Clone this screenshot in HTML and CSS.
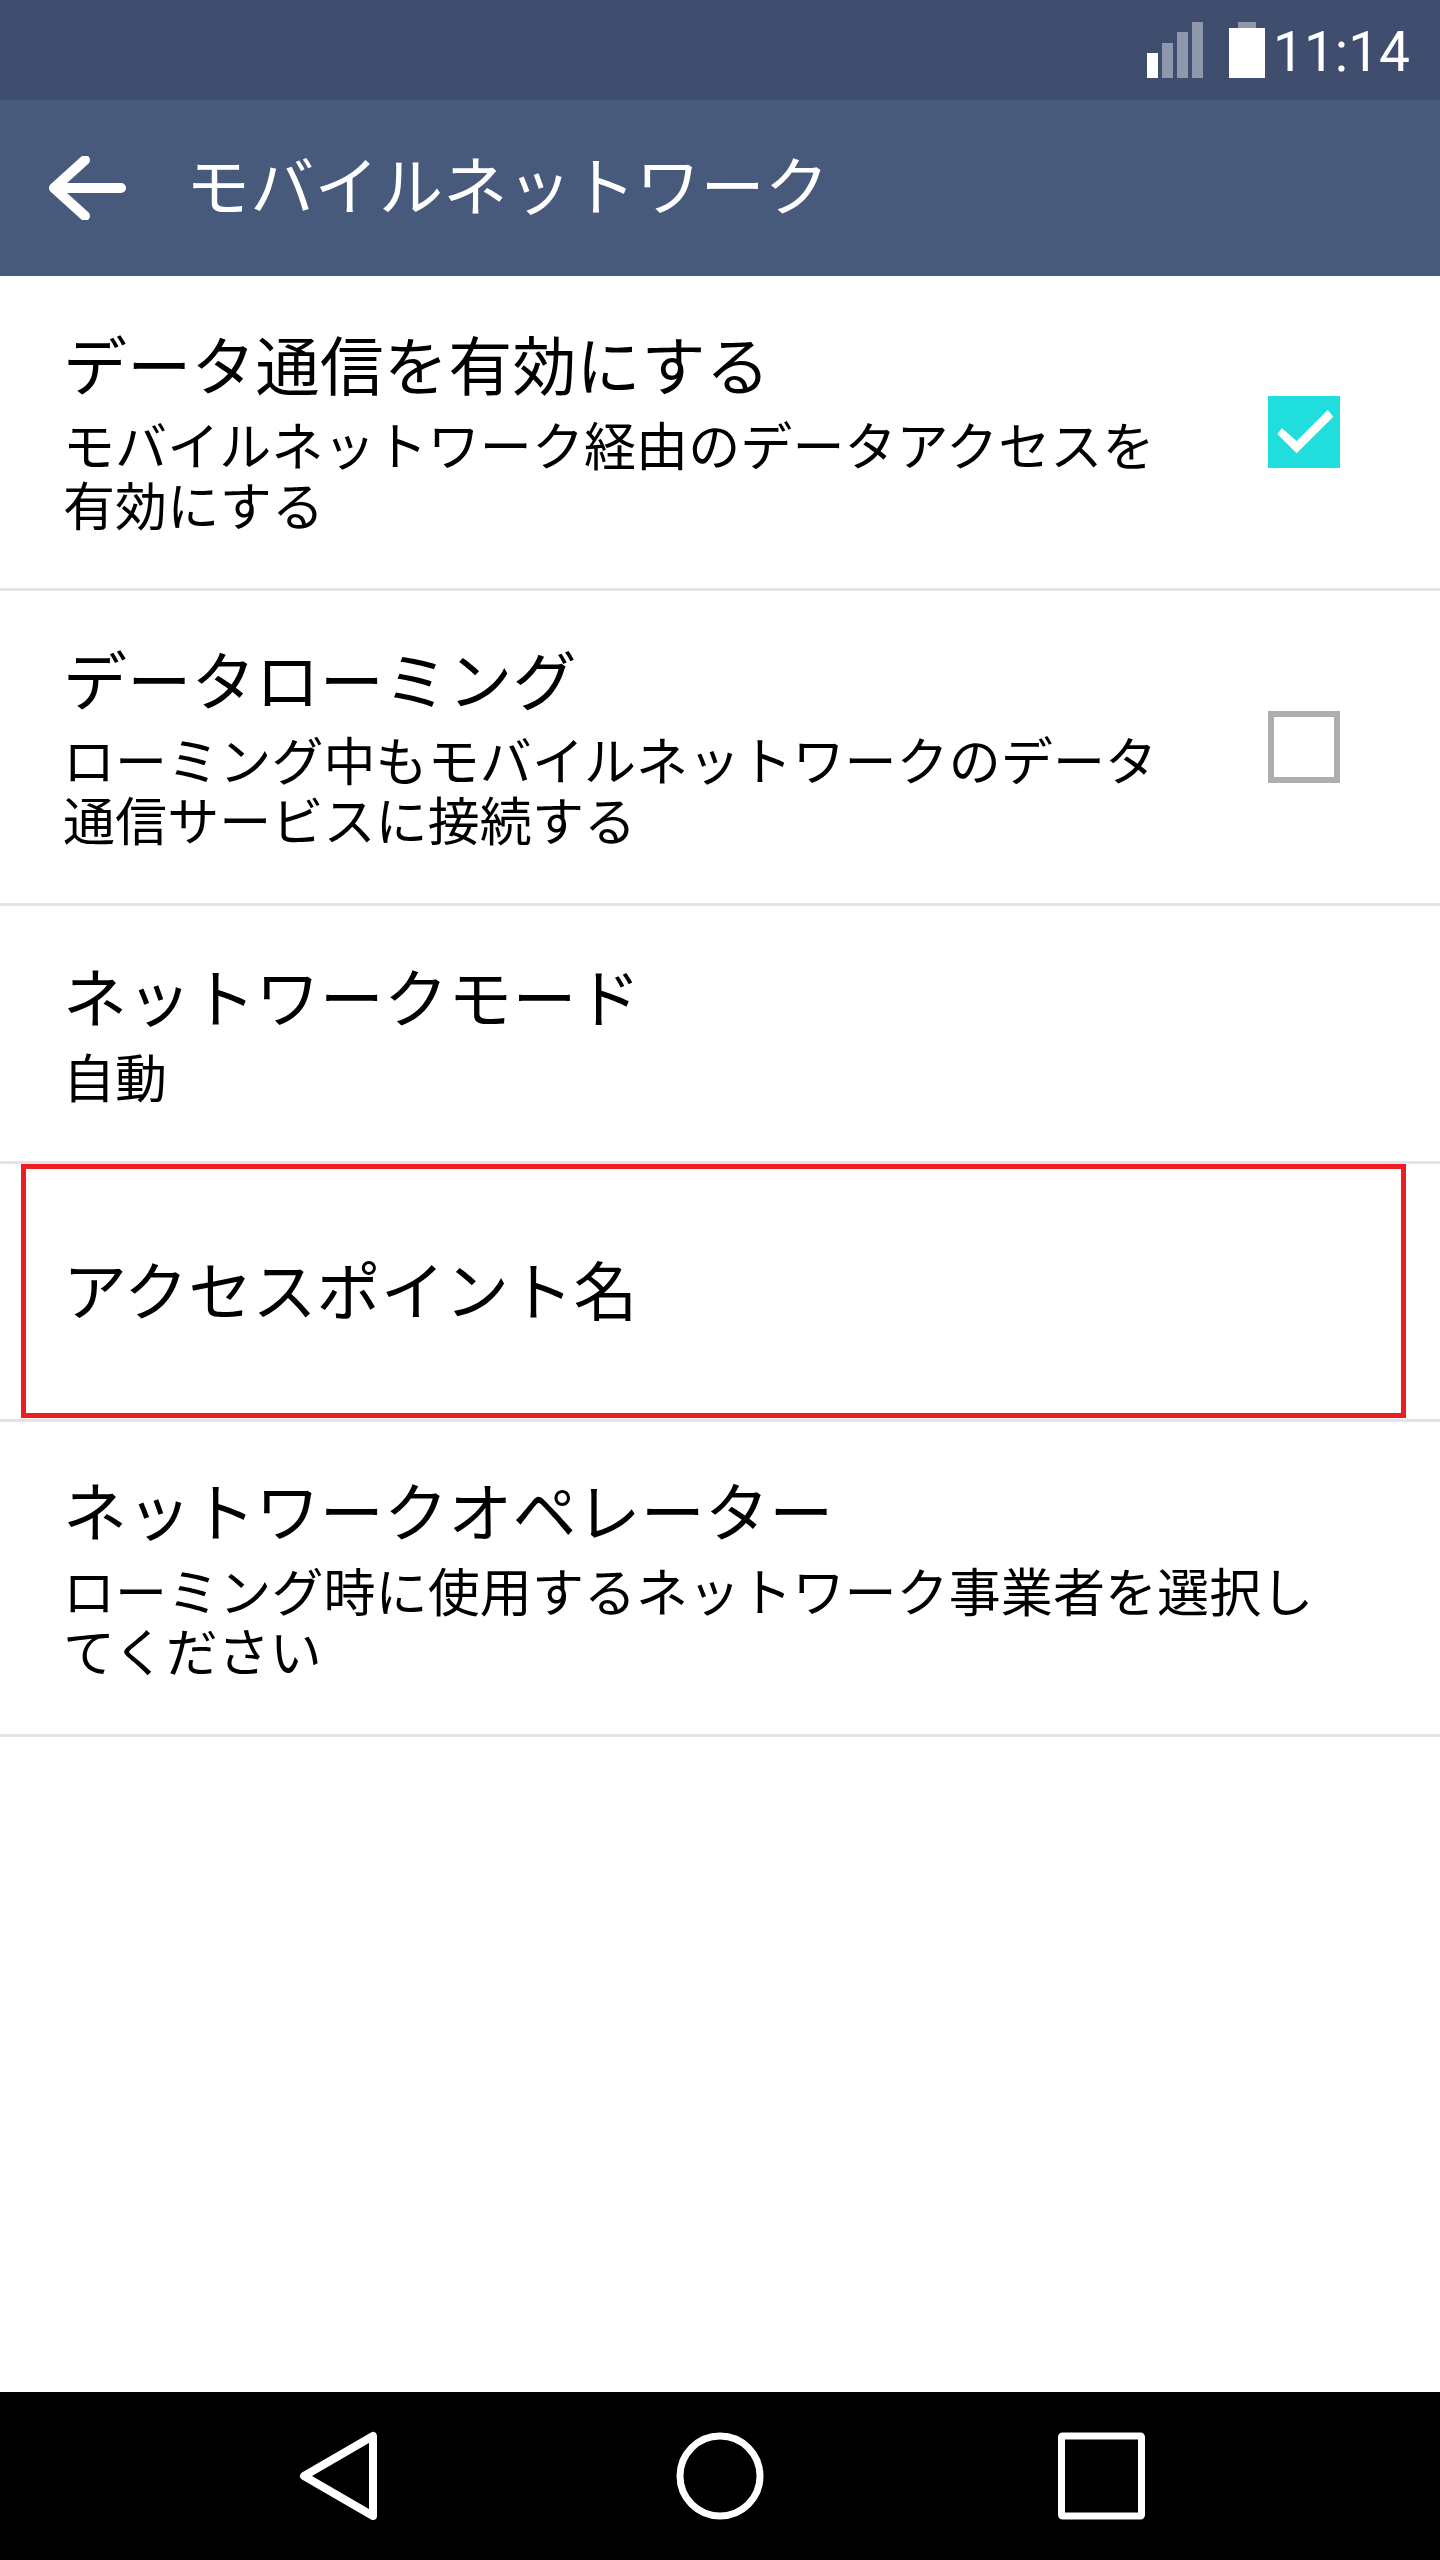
FILE: index.html
```html
<!DOCTYPE html>
<html lang="ja">
<head>
  <meta charset="UTF-8">
  <meta name="viewport" content="width=device-width, initial-scale=1.0">
  <title>モバイルネットワーク</title>
  <link rel="stylesheet" href="styles.css">
</head>
<body>
  <div class="status-bar">
    <svg class="signal" width="56" height="56" viewBox="0 0 56 56">
      <rect x="0" y="31" width="11" height="25" fill="#fff"/>
      <rect x="15" y="21" width="11" height="35" fill="#8f98ab"/>
      <rect x="30" y="10" width="11" height="46" fill="#8f98ab"/>
      <rect x="45" y="0" width="11" height="56" fill="#8f98ab"/>
    </svg>
    <svg class="battery" width="36" height="56" viewBox="0 0 36 56">
      <rect x="9" y="0" width="18" height="6" fill="#8f98ab"/>
      <rect x="0" y="6" width="36" height="50" fill="#fff"/>
    </svg>
    <span class="clock">11:14</span>
  </div>

  <div class="toolbar">
    <svg class="back-arrow" width="80" height="64" viewBox="0 0 80 64">
      <path d="M5 32 H72 M36 4 L5 32 L36 60" fill="none" stroke="#fff" stroke-width="10" stroke-linecap="round" stroke-linejoin="round"/>
    </svg>
    <h1 class="toolbar-title">モバイルネットワーク</h1>
  </div>

  <div class="settings-list">
    <div class="row">
      <div class="row-text">
        <div class="row-title">データ通信を有効にする</div>
        <div class="row-sub">モバイルネットワーク経由のデータアクセスを有効にする</div>
      </div>
      <div class="checkbox checked">
        <svg width="72" height="72" viewBox="0 0 72 72">
          <path d="M9.3 38 L14 32.3 L28.7 45 L59.7 14 L65.3 20.7 L28.7 57.3 Z" fill="#fff"/>
        </svg>
      </div>
    </div>
    <div class="row">
      <div class="row-text">
        <div class="row-title">データローミング</div>
        <div class="row-sub">ローミング中もモバイルネットワークのデータ通信サービスに接続する</div>
      </div>
      <div class="checkbox"></div>
    </div>
    <div class="row row-short">
      <div class="row-text">
        <div class="row-title">ネットワークモード</div>
        <div class="row-sub">自動</div>
      </div>
    </div>
    <div class="row row-short row-single">
      <div class="row-text">
        <div class="row-title">アクセスポイント名</div>
      </div>
      <div class="highlight"></div>
    </div>
    <div class="row">
      <div class="row-text row-text-wide">
        <div class="row-title">ネットワークオペレーター</div>
        <div class="row-sub">ローミング時に使用するネットワーク事業者を選択してください</div>
      </div>
    </div>
  </div>

  <div class="nav-bar">
    <svg width="96" height="96" viewBox="0 0 96 96">
      <path d="M13 48 L82 8 V88 Z" fill="none" stroke="#fff" stroke-width="8" stroke-linejoin="round"/>
    </svg>
    <svg width="96" height="96" viewBox="0 0 96 96">
      <circle cx="48" cy="48" r="40" fill="none" stroke="#fff" stroke-width="7"/>
    </svg>
    <svg width="96" height="96" viewBox="0 0 96 96">
      <rect x="8.5" y="8" width="80" height="80" rx="1" fill="none" stroke="#fff" stroke-width="7"/>
    </svg>
  </div>
</body>
</html>
```

FILE: styles.css
```css
* {
  margin: 0;
  padding: 0;
  box-sizing: border-box;
}
body {
  display: flex;
  flex-direction: column;
  height: 2560px;
  background: #fff;
  color: #000;
  font-family: "Noto Sans CJK JP", "Noto Sans", sans-serif;
}

.status-bar {
  display: flex;
  align-items: flex-start;
  height: 100px;
  padding: 22px 0 0 1147px;
  background: #3f4e6e;
}
.status-bar svg {
  flex: none;
}
.battery {
  margin-left: 26px;
}
.clock {
  margin-left: 8px;
  margin-top: -2px;
  font-family: Roboto, sans-serif;
  font-weight: 400;
  font-size: 55px;
  line-height: 64px;
  color: #fff;
  white-space: nowrap;
}

.toolbar {
  display: flex;
  align-items: center;
  height: 176px;
  padding-left: 49px;
  background: #475a7b;
}
.toolbar-title {
  margin-left: 57px;
  padding-bottom: 12px;
  font-size: 64px;
  font-weight: 400;
  line-height: 80px;
  letter-spacing: 0.3px;
  color: #fff;
}

.settings-list {
  flex: 1;
}
.row {
  position: relative;
  display: flex;
  justify-content: space-between;
  align-items: center;
  height: 315px;
  padding: 0 100px 0 63px;
  border-bottom: 3px solid #e4e4e4;
}
.row-short {
  height: 258px;
}
.row-text {
  width: 1100px;
  padding-bottom: 6px;
}
.row-text-wide {
  width: 1260px;
}
.row-single .row-text {
  padding-bottom: 10px;
}
.row-title {
  font-size: 64px;
  line-height: 76px;
  letter-spacing: 0.2px;
  white-space: nowrap;
}
.row-sub {
  margin-top: 14px;
  font-size: 52px;
  line-height: 60px;
  letter-spacing: 0.1px;
}
.checkbox {
  flex: none;
  width: 72px;
  height: 72px;
  border: 6px solid #aeaeae;
}
.checkbox.checked {
  border: none;
  background: #1fdedb;
}
.checkbox svg {
  display: block;
}
.highlight {
  position: absolute;
  top: 0;
  left: 21px;
  width: 1385px;
  height: 254px;
  border: 5px solid #ee1c25;
}

.nav-bar {
  display: flex;
  justify-content: center;
  align-items: center;
  gap: 285px;
  height: 168px;
  background: #000;
}
```
